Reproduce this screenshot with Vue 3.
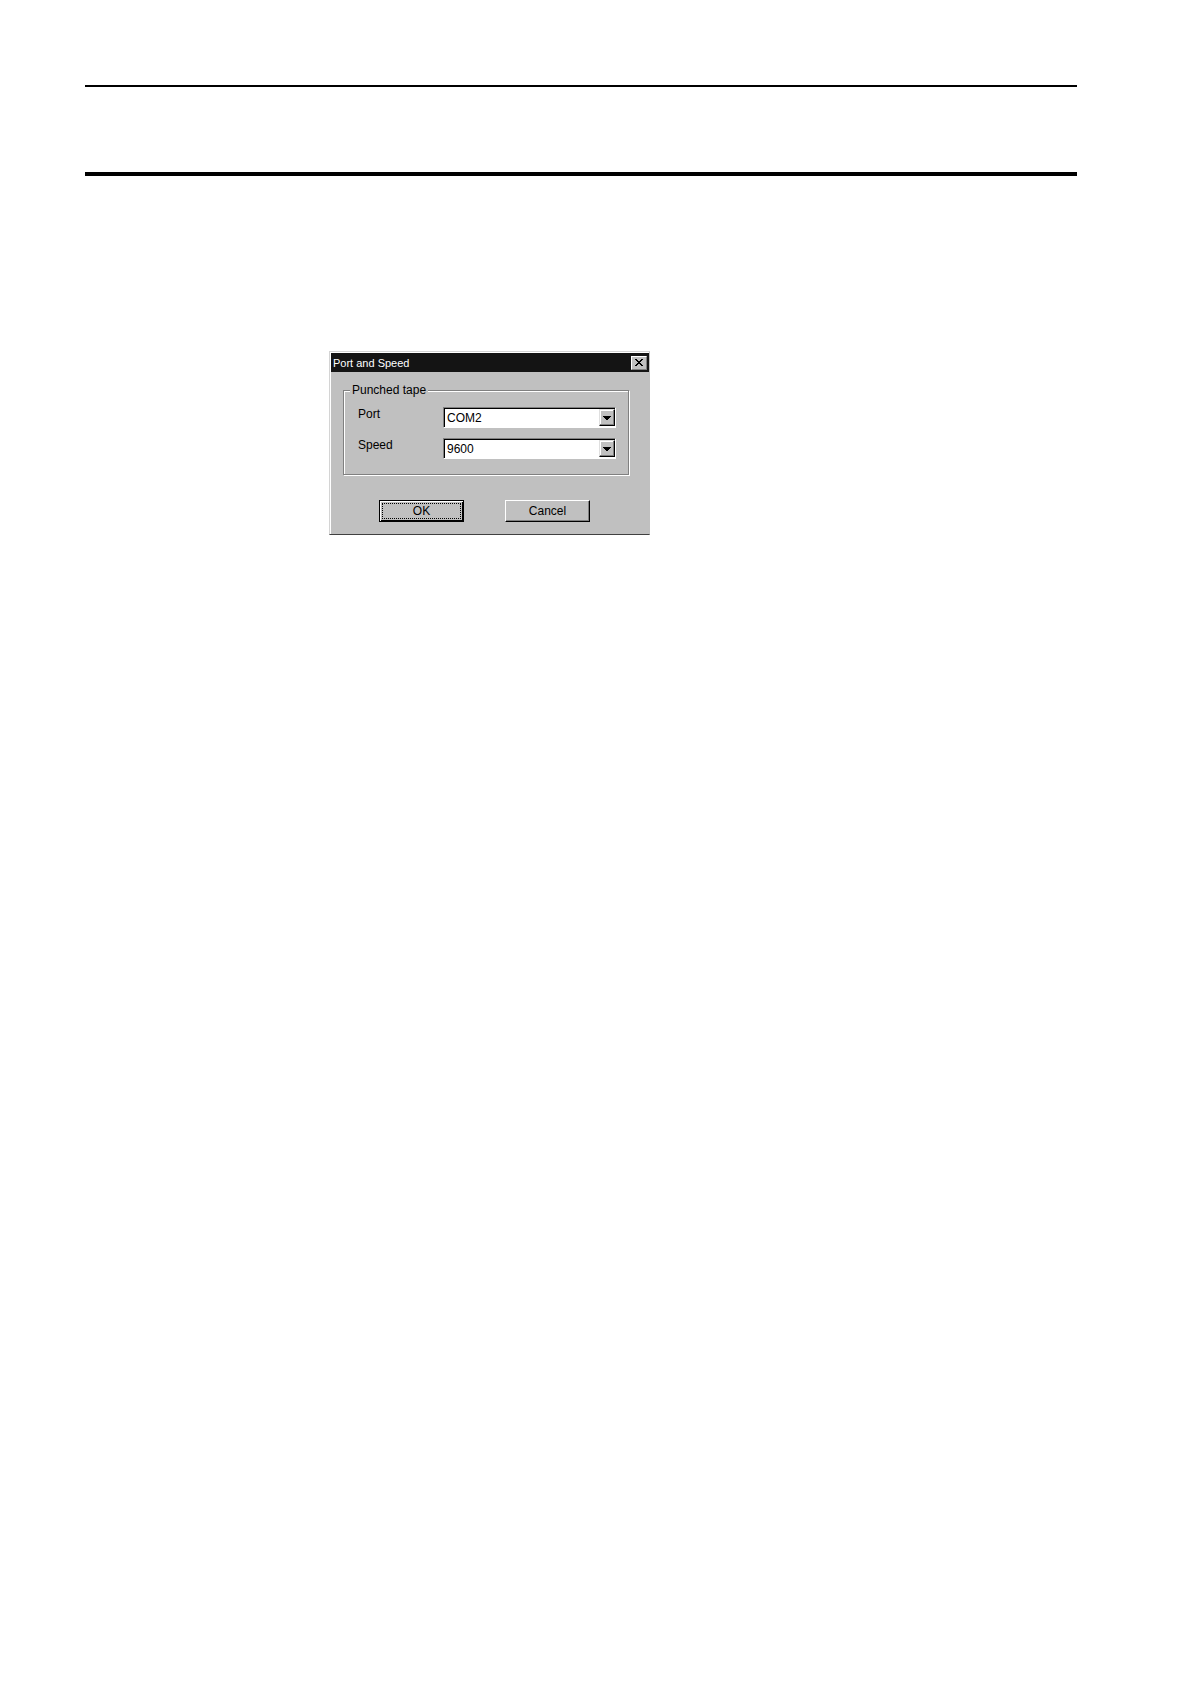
<script setup>
import { reactive } from 'vue'

const settings = reactive({ port: 'COM2', speed: '9600' })

const fields = [
  { key: 'port', label: 'Port', options: ['COM1', 'COM2', 'COM3', 'COM4'] },
  { key: 'speed', label: 'Speed', options: ['2400', '4800', '9600', '19200'] },
]
</script>

<template>
  <main class="page">
    <header class="page-head"></header>
    <form class="dialog" aria-labelledby="dialog-title" @submit.prevent>
      <div class="title-bar">
        <h1 id="dialog-title" class="title">Port and Speed</h1>
        <button type="button" class="close" aria-label="Close">
          <svg width="8" height="7" viewBox="0 0 8 7" shape-rendering="crispEdges" aria-hidden="true">
            <path d="M0 0h2v1H0zM6 0h2v1H6zM1 1h2v1H1zM5 1h2v1H5zM2 2h4v1H2zM3 3h2v1H3zM2 4h4v1H2zM1 5h2v1H1zM5 5h2v1H5zM0 6h2v1H0zM6 6h2v1H6z" fill="#000" />
          </svg>
        </button>
      </div>
      <div class="body">
        <fieldset class="group">
          <legend class="legend">Punched tape</legend>
          <div v-for="field in fields" :key="field.key" class="row">
            <label class="label" :for="field.key">{{ field.label }}</label>
            <div class="combo">
              <select :id="field.key" v-model="settings[field.key]" class="select">
                <option v-for="option in field.options" :key="option">{{ option }}</option>
              </select>
              <span class="arrow" aria-hidden="true">
                <svg width="8" height="4" viewBox="0 0 8 4" shape-rendering="crispEdges">
                  <path d="M0 0h8v1H7v1H6v1H5v1H3V3H2V2H1V1H0z" fill="#000" />
                </svg>
              </span>
            </div>
          </div>
        </fieldset>
        <div class="actions">
          <button type="submit" class="button default"><span class="focus">OK</span></button>
          <button type="button" class="button">Cancel</button>
        </div>
      </div>
    </form>
  </main>
</template>

<style>
body {
  margin: 0;
  background: #fff;
}
</style>

<style scoped>
.page {
  box-sizing: border-box;
  min-height: 100vh;
  padding: 85px 113px 85px 85px;
  font: 12px/14px "Liberation Sans", Arial, sans-serif;
  color: #000;
}

.page-head {
  height: 85px;
  border-top: 2px solid #000;
  border-bottom: 4px solid #000;
}

.dialog {
  box-sizing: border-box;
  width: 321px;
  max-width: 100%;
  margin: 175px 0 0 244px;
  border: 1px solid #d4d4d4;
  border-right-color: #c0c0c0;
  border-bottom-color: #404040;
  background: #c0c0c0;
  box-shadow: inset 1px 1px #fff;
  padding: 1px 0 0 1px;
}

.title-bar {
  display: flex;
  align-items: center;
  justify-content: space-between;
  height: 19px;
  padding: 0 2px;
  background: #141414;
}

.title {
  margin: 0;
  font-size: 11px;
  font-weight: 400;
  color: #fff;
}

.close {
  display: flex;
  align-items: center;
  justify-content: center;
  box-sizing: border-box;
  width: 16px;
  height: 14px;
  padding: 0;
  border: 1px solid;
  border-color: #fff #808080 #808080 #fff;
  background: #c0c0c0;
}

.body {
  padding: 11px 20px 12px 12px;
}

/* Etched frame: grey line with a white line to its lower right */
.group {
  min-width: 0;
  margin: 0;
  padding: 0 12px 5px 14px;
  border: 1px solid #808080;
  box-shadow: 1px 1px #fff, inset 1px 1px #fff;
}

.legend {
  margin-left: -8px;
  padding: 0 2px;
  background: #c0c0c0;
}

.row {
  display: flex;
  align-items: flex-start;
  margin: 10px 0;
}

.label {
  width: 85px;
}

.combo {
  position: relative;
  flex: 1;
}

.select {
  display: block;
  appearance: none;
  box-sizing: border-box;
  width: 100%;
  height: 21px;
  padding: 0 18px 0 3px;
  border: 1px solid;
  border-color: #808080 #fff #fff #808080;
  border-radius: 0;
  background: #fff;
  box-shadow: inset 1px 1px #000;
  font: inherit;
  color: #000;
}

.arrow {
  position: absolute;
  top: 2px;
  right: 1px;
  display: flex;
  align-items: center;
  justify-content: center;
  box-sizing: border-box;
  width: 16px;
  height: 17px;
  border: 1px solid;
  border-color: #dfdfdf #000 #000 #dfdfdf;
  background: #c0c0c0;
  box-shadow: inset -1px -1px #808080, inset 1px 1px #fff;
  pointer-events: none;
}

.actions {
  display: flex;
  gap: 41px;
  margin-top: 25px;
  padding-left: 36px;
}

.button {
  box-sizing: border-box;
  width: 85px;
  height: 22px;
  padding: 0;
  border: 1px solid;
  border-color: #fff #000 #000 #fff;
  background: #c0c0c0;
  box-shadow: inset -1px -1px #808080;
  font: inherit;
  color: #000;
}

.default {
  padding: 2px;
  border-color: #000;
  box-shadow: inset 1px 1px #fff, inset -1px -1px #000;
}

.focus {
  display: block;
  box-sizing: border-box;
  height: 16px;
  border: 1px dotted #000;
}
</style>
